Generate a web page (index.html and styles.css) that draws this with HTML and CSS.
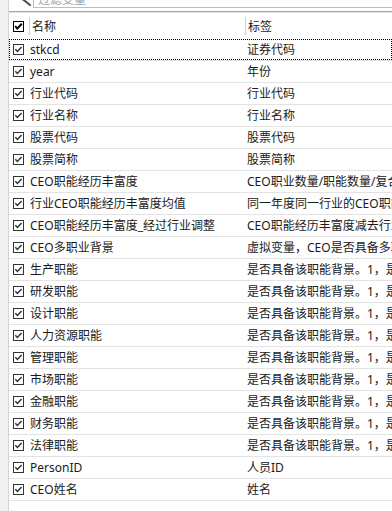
FILE: index.html
```html
<!DOCTYPE html>
<html lang="zh-CN">
<head>
    <meta charset="UTF-8">
    <meta name="viewport" content="width=device-width, initial-scale=1.0">
    <title>变量列表</title>
    <link rel="stylesheet" href="styles.css">
</head>
<body>
    <div class="app">
        <div class="gutter"></div>
        <div class="main">
            <div class="filter-bar">
                <svg class="search-icon" width="24" height="17" viewBox="0 0 24 17">
                    <circle cx="6" cy="-1" r="6" fill="none" stroke="#555" stroke-width="2"/>
                    <line x1="11" y1="6" x2="21" y2="14" stroke="#555" stroke-width="2.2" stroke-linecap="round"/>
                </svg>
                <div class="filter-box">过滤变量</div>
            </div>

            <div class="var-list">
                <div class="var-header">
                    <div class="head-check">
                        <svg class="check head" width="11" height="11" viewBox="0 0 11 11">
                            <rect x="0.5" y="0.5" width="10" height="10" fill="#fff" stroke="#000"/>
                            <polyline points="2.2,5.2 4.3,7.6 8.8,2.8" fill="none" stroke="#000" stroke-width="2"/>
                        </svg>
                    </div>
                    <span class="head-sep"></span>
                    <div class="head-name">名称</div>
                    <span class="head-sep"></span>
                    <div class="head-label">标签</div>
                </div>
                <div id="rows"></div>
            </div>
        </div>
    </div>

    <script>
        const vars = [
            ['stkcd', '证券代码'],
            ['year', '年份'],
            ['行业代码', '行业代码'],
            ['行业名称', '行业名称'],
            ['股票代码', '股票代码'],
            ['股票简称', '股票简称'],
            ['CEO职能经历丰富度', 'CEO职业数量/职能数量/复合型职业背景'],
            ['行业CEO职能经历丰富度均值', '同一年度同一行业的CEO职能经历丰富度均值'],
            ['CEO职能经历丰富度_经过行业调整', 'CEO职能经历丰富度减去行业均值'],
            ['CEO多职业背景', '虚拟变量，CEO是否具备多职业背景'],
            ['生产职能', '是否具备该职能背景。1，是；0，否'],
            ['研发职能', '是否具备该职能背景。1，是；0，否'],
            ['设计职能', '是否具备该职能背景。1，是；0，否'],
            ['人力资源职能', '是否具备该职能背景。1，是；0，否'],
            ['管理职能', '是否具备该职能背景。1，是；0，否'],
            ['市场职能', '是否具备该职能背景。1，是；0，否'],
            ['金融职能', '是否具备该职能背景。1，是；0，否'],
            ['财务职能', '是否具备该职能背景。1，是；0，否'],
            ['法律职能', '是否具备该职能背景。1，是；0，否'],
            ['PersonID', '人员ID'],
            ['CEO姓名', '姓名']
        ];

        const checkSvg = '<svg class="check" width="11" height="11" viewBox="0 0 11 11">' +
            '<rect x="0.5" y="0.5" width="10" height="10" fill="#fff" stroke="#333"/>' +
            '<polyline points="2.3,5.3 4.4,7.5 8.6,3" fill="none" stroke="#333" stroke-width="1.5"/></svg>';

        // 生成变量行
        const rows = document.getElementById('rows');
        vars.forEach((v, i) => {
            const row = document.createElement('div');
            row.classList.add('var-row');
            if (i === 0) row.classList.add('focused');
            row.innerHTML = `
                <div class="cell-name">${checkSvg}<span class="txt">${v[0]}</span></div>
                <div class="cell-label"><span class="txt">${v[1]}</span></div>
            `;
            rows.appendChild(row);
        });
    </script>
</body>
</html>
```

FILE: styles.css
```css
html, body {
    margin: 0;
    padding: 0;
    background-color: #fff;
}
body {
    font-family: "Noto Sans", "Noto Sans CJK SC", sans-serif;
    font-size: 12px;
    color: #1a1a1a;
    overflow: hidden;
}
.app {
    display: flex;
    height: 511px;
    overflow: hidden;
}
.gutter {
    width: 8px;
    flex-shrink: 0;
    background-color: #f0f0f0;
    border-right: 1px solid #d4d4d4;
}
.main {
    flex: 1;
    min-width: 0;
}
.filter-bar {
    display: flex;
    height: 17px;
    margin-top: -9px;
    margin-bottom: 3px;
}
.search-icon {
    flex-shrink: 0;
    overflow: visible;
}
.filter-box {
    flex: 1;
    border: 1px solid #b9bec6;
    border-right: none;
    padding-left: 4px;
    line-height: 15px;
    color: #9aa4b0;
}
.var-list {
    border-top: 1px solid #a3a3a3;
}
.var-header {
    display: flex;
    align-items: center;
    height: 26px;
    border-top: 1px solid #e4e4e4;
}
.head-check {
    width: 20px;
    padding-left: 4px;
    box-sizing: border-box;
    display: flex;
}
.head-sep {
    width: 1px;
    height: 18px;
    background-color: #d0d0d0;
    flex-shrink: 0;
}
.head-name {
    width: 215px;
    padding-left: 2px;
    box-sizing: border-box;
}
.head-label {
    padding-left: 2px;
}
.check {
    flex-shrink: 0;
    display: block;
}
.var-row {
    display: flex;
    height: 21px;
    line-height: 21px;
    border-top: 1px solid #e3e3e3;
}
.var-row:first-child {
    border-top: none;
}
.var-row:last-child {
    border-bottom: 1px solid #e3e3e3;
}
.var-row.focused {
    outline: 1px dotted #000;
    outline-offset: -1px;
}
.cell-name {
    width: 236px;
    flex-shrink: 0;
    display: flex;
    align-items: center;
    padding-left: 4px;
    box-sizing: border-box;
    overflow: hidden;
}
.cell-name .txt {
    margin-left: 6px;
    white-space: nowrap;
}
.cell-label {
    flex: 1;
    min-width: 0;
    padding-left: 2px;
    white-space: nowrap;
    overflow: hidden;
}
```
